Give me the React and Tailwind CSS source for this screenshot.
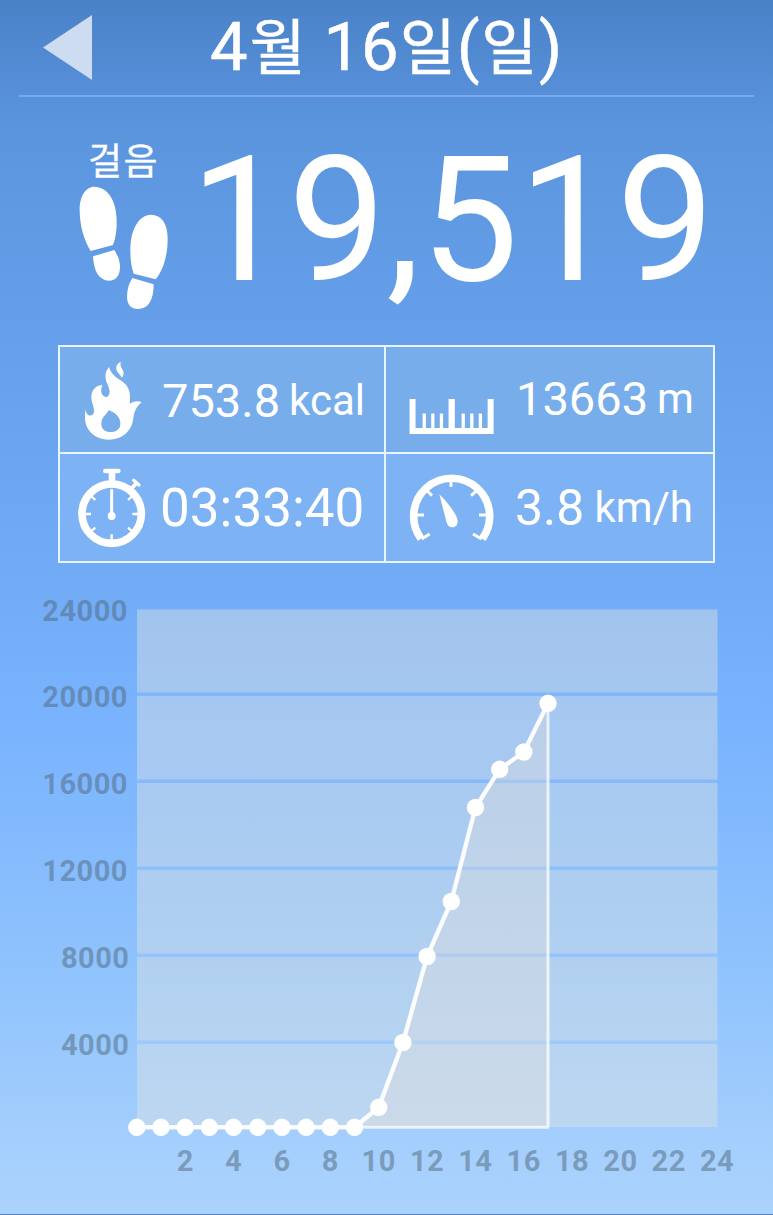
const points = [
  1127.3, 1127.3, 1127.3, 1127.3, 1127.3, 1127.3, 1127.3, 1127.3, 1127.3,
  1127.3, 1107.3, 1042.5, 956.5, 901.5, 807.5, 769.3, 752, 703.3,
].map((y, hour) => [136.8 + hour * 24.19, y]);

const yLabels = [24000, 20000, 16000, 12000, 8000, 4000];
const xLabels = [2, 4, 6, 8, 10, 12, 14, 16, 18, 20, 22, 24];

// [top, bottom] of every band between two grid lines
const bands = [
  [609.5, 692.5],
  [696, 779.5],
  [783, 866.5],
  [870, 953.5],
  [957, 1040.5],
  [1044, 1127],
];

function Footprints({ className }) {
  return (
    <svg className={className} viewBox="87 169 267 372" fill="white">
      <path d="M133 171C107 171 89 200 89 240C89 290 103 333 122 364L189 346C197 325 201 300 200 270C199 212 172 171 133 171Z" />
      <path d="M129 380L193 361C203 376 210 394 210 412C210 438 197 453 177 453C147 453 131 424 129 380Z" />
      <path d="M303 255C267 255 241 300 241 358C241 390 244 412 251 432L317 449C339 422 353 378 353 328C353 282 335 255 303 255Z" />
      <path d="M247 445L311 464C311 510 296 538 264 538C243 538 231 524 231 501C231 479 237 461 247 445Z" />
    </svg>
  );
}

function Flame({ className }) {
  return (
    <svg className={className} viewBox="105 78 171 237" fill="white">
      <path
        fillRule="evenodd"
        d="M177 96C164 112 164 130 172 146C179 162 181 174 176 181C169 192 156 184 154 172C153 163 154 156 158 150C140 150 124 164 124 186C124 203 133 215 132 230C131 240 122 245 114 239C108 234 106 228 105 222V250C106 288 137 314 176 314C217 314 246 288 250 250C252 230 260 214 275 201C261 197 249 199 239 207C243 176 238 154 218 140C197 127 183 116 177 96ZM175 226C174 237 154 244 154 266C154 282 165 291 182 291C200 291 211 281 211 266C211 246 196 232 175 226Z"
      />
      <path d="M212 80C199 87 196 98 201 108C205 116 211 120 216 128C223 119 222 110 216 101C211 94 211 88 212 80Z" />
    </svg>
  );
}

function Stopwatch({ className }) {
  return (
    <svg className={className} viewBox="84 399 204 240" fill="none" stroke="white">
      <circle cx="185" cy="536" r="89" strokeWidth="23" />
      <path d="M166 408H205" strokeWidth="14" strokeLinecap="round" />
      <path d="M186 408V440" strokeWidth="20" />
      <path d="M251 436L267 450" strokeWidth="10" strokeLinecap="round" />
      <path d="M243 462L260 444" strokeWidth="12" />
      <path d="M185 466V540" strokeWidth="9" strokeLinecap="round" />
      <circle cx="185" cy="543" r="12" fill="white" stroke="none" />
      <path
        d="M105 537H123M247 537H265M185 598V618M119 479L136 495M251 479L234 495M119 593L136 578M251 593L234 578"
        strokeWidth="7"
      />
    </svg>
  );
}

function Ruler({ className }) {
  return (
    <svg className={className} viewBox="117 191 255 106" fill="none" stroke="white">
      <path d="M126.500 191V288H363V191" strokeWidth="18" />
      <path d="M245 191V288" strokeWidth="19" />
      <path d="M162 235V285M188 235V285M214 235V285M280 235V285M306 235V285M332 235V285" strokeWidth="10" />
    </svg>
  );
}

function Gauge({ className }) {
  return (
    <svg className={className} viewBox="117 412 255 210" fill="none" stroke="white">
      <path d="M153 612A114 114 0 1 1 337 612" strokeWidth="23" />
      <path
        d="M243 430V456M172 469L186 483M319 469L303 483M140 541H162M327 541H350M155 613L179 598M335 613L309 598"
        strokeWidth="9"
      />
      <path d="M208 479C225 496 263 538 263 560C263 571 257 578 247 578C239 578 233 573 230 564Z" fill="white" stroke="none" />
    </svg>
  );
}

function StepChart() {
  const line = points.map((p) => p.join(",")).join(" ");
  const [endX] = points[points.length - 1];

  return (
    <svg
      className="block h-[625px] w-[773px] font-['Roboto',sans-serif] text-[29px] font-bold"
      viewBox="0 590 773 625"
    >
      {bands.map(([top, bottom]) => (
        <rect key={top} x="137" y={top} width="580.500" height={bottom - top} fill="rgba(226,228,224,0.42)" />
      ))}
      {bands.slice(1).map(([top]) => (
        <rect key={top} x="137" y={top - 3.5} width="580.500" height="3.500" fill="rgba(226,228,224,0.08)" />
      ))}

      {/* Area under the line */}
      <polygon
        points={`${line} ${endX},1127.3`}
        fill="rgba(236,224,216,0.3)"
        stroke="rgba(255,255,255,0.75)"
        strokeWidth="3"
        strokeLinejoin="round"
      />
      <polyline points={line} fill="none" stroke="white" strokeOpacity="0.85" strokeWidth="4.500" />
      {points.map(([x, y]) => (
        <circle key={x} cx={x} cy={y} r="8.700" fill="white" />
      ))}

      {/* Axis labels */}
      <g fill="rgba(80,103,122,0.5)" letterSpacing="0.5">
        {yLabels.map((value, i) => (
          <text key={value} x={value < 10000 ? 129.5 : 128} y={620.5 + i * 86.8} textAnchor="end">
            {value}
          </text>
        ))}
        {xLabels.map((value) => (
          <text key={value} x={137 + value * 24.17} y="1171" textAnchor="middle">
            {value}
          </text>
        ))}
      </g>
    </svg>
  );
}

export default function App() {
  return (
    <div className="flex h-[1215px] w-[773px] flex-col overflow-hidden border-b border-[#5585b8] bg-[linear-gradient(to_bottom,#4a82c8_0px,#5b95de_130px,#659fe9_320px,#72acf7_590px,#7bb4fe_740px,#92c5fd_1000px,#abd2fd_1200px)] font-['Roboto','Noto_Sans_CJK_KR',sans-serif] text-white">
      {/* Header */}
      <header className="flex h-[95px] shrink-0 items-start">
        <svg className="mt-[15px] ml-[43px] h-[65px] w-[49px]" viewBox="0 0 49 65">
          <path d="M49 0V65L0 32.500Z" fill="#cddcf1" />
        </svg>
        <h1 className="mt-[14px] ml-[118px] text-[67px] leading-none whitespace-nowrap [-webkit-text-stroke:0.500px_white]">
          4<span className="pr-px pl-[2px] text-[61px]">월</span> 16
          <span className="px-[1px] text-[61px]">일</span>(
          <span className="px-[1.500px] text-[61px]">일</span>)
        </h1>
      </header>
      <div className="mx-[19px] h-[2px] shrink-0 bg-[#78a8e8]" />

      {/* Step count */}
      <section className="flex h-[248px] shrink-0 items-start">
        <div className="ml-[79px] w-[89px] shrink-0">
          <div className="mt-[47px] ml-[9px] h-[42px] text-[37px] leading-none tracking-[1.500px] whitespace-nowrap [-webkit-text-stroke:0.300px_white]">
            걸음
          </div>
          <Footprints className="h-[124px] w-[89px]" />
        </div>
        <div className="mt-[37px] ml-[22px] text-[174.500px] leading-none">19,519</div>
      </section>

      {/* Daily stats */}
      <section className="ml-[58px] grid h-[218px] w-[657px] shrink-0 grid-cols-[324px_327px] grid-rows-[105px_107px] gap-[2px] border-2 border-[#e8f4ff] bg-[#e8f4ff]">
        <div className="flex items-start bg-[#78adec] whitespace-nowrap">
          <Flame className="mt-[14px] ml-[25px] h-[79px] w-[57px] shrink-0" />
          <span className="mt-[29.500px] ml-[20px] text-[47px] leading-none">753.8</span>
          <span className="mt-[32.500px] ml-[9px] text-[42px] leading-none">kcal</span>
        </div>
        <div className="flex items-start bg-[#78adec] whitespace-nowrap">
          <Ruler className="mt-[52px] ml-[23px] h-[35px] w-[85px] shrink-0" />
          <span className="mt-[28px] ml-[22px] text-[47px] leading-none">13663</span>
          <span className="mt-[30.500px] ml-[9px] text-[42px] leading-none">m</span>
        </div>
        <div className="flex items-start bg-[#7db2f4] whitespace-nowrap">
          <Stopwatch className="mt-[14px] ml-[18px] h-[80px] w-[68px] shrink-0" />
          <span className="mt-[28px] ml-[14px] text-[53px] leading-none">03:33:40</span>
        </div>
        <div className="flex items-start bg-[#7db2f4] whitespace-nowrap">
          <Gauge className="mt-[18px] ml-[23px] h-[70px] w-[85px] shrink-0" />
          <span className="mt-[29px] ml-[21px] text-[50px] leading-none">3.8</span>
          <span className="mt-[33px] ml-[10px] text-[42px] leading-none">km/h</span>
        </div>
      </section>

      {/* Hourly chart */}
      <section className="mt-[27px] shrink-0">
        <StepChart />
      </section>
    </div>
  );
}
